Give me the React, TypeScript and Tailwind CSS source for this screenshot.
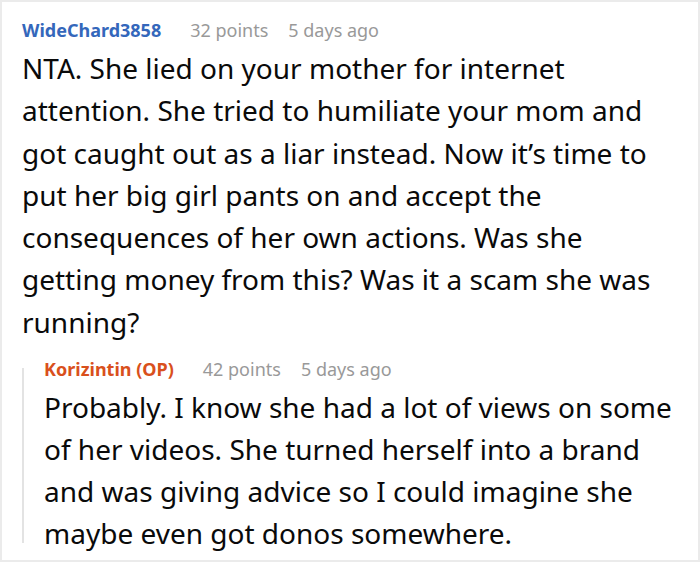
import React from 'react';

type Comment = {
    author: string;
    authorColor: string;
    points: string;
    time: string;
    body: string;
};

const top: Comment = {
    author: 'WideChard3858',
    authorColor: 'text-[#3467bb]',
    points: '32 points',
    time: '5 days ago',
    body: 'NTA. She lied on your mother for internet attention. She tried to humiliate your mom and got caught out as a liar instead. Now it\u2019s time to put her big girl pants on and accept the consequences of her own actions. Was she getting money from this? Was it a scam she was running?',
};

const reply: Comment = {
    author: 'Korizintin (OP)',
    authorColor: 'text-[#d9501c]',
    points: '42 points',
    time: '5 days ago',
    body: 'Probably. I know she had a lot of views on some of her videos. She turned herself into a brand and was giving advice so I could imagine she maybe even got donos somewhere.',
};

function Header({ c }: { c: Comment }) {
    return (
        <div className="flex items-center h-[24px] text-[18px] leading-[24px]">
            <span className={`font-bold ${c.authorColor}`}>{c.author}</span>
            <span className="ml-[29px] text-[#999]">{c.points}</span>
            <span className="ml-[20px] text-[#999]">{c.time}</span>
        </div>
    );
}

export default function App() {
    return (
        <div
            className="w-[700px] h-[562px] bg-white border-2 border-[#ebebeb] overflow-hidden"
            style={{ fontFamily: '"Noto Sans", "Open Sans", sans-serif' }}
        >
            <div className="pl-[20px] pt-[16px]">
                <Header c={top} />
                <p className="mt-[5px] w-[652px] text-[28px] leading-[42.3px] text-[#0a0a0a]">{top.body}</p>

                <div className="flex mt-[14px]">
                    <div className="w-[2px] bg-[#e3e3e3] mt-[11px] mb-[11px] shrink-0" />
                    <div className="pl-[20px]">
                        <Header c={reply} />
                        <p className="mt-[5px] w-[640px] text-[28px] leading-[42px] text-[#0a0a0a]">{reply.body}</p>
                    </div>
                </div>
            </div>
        </div>
    );
}
